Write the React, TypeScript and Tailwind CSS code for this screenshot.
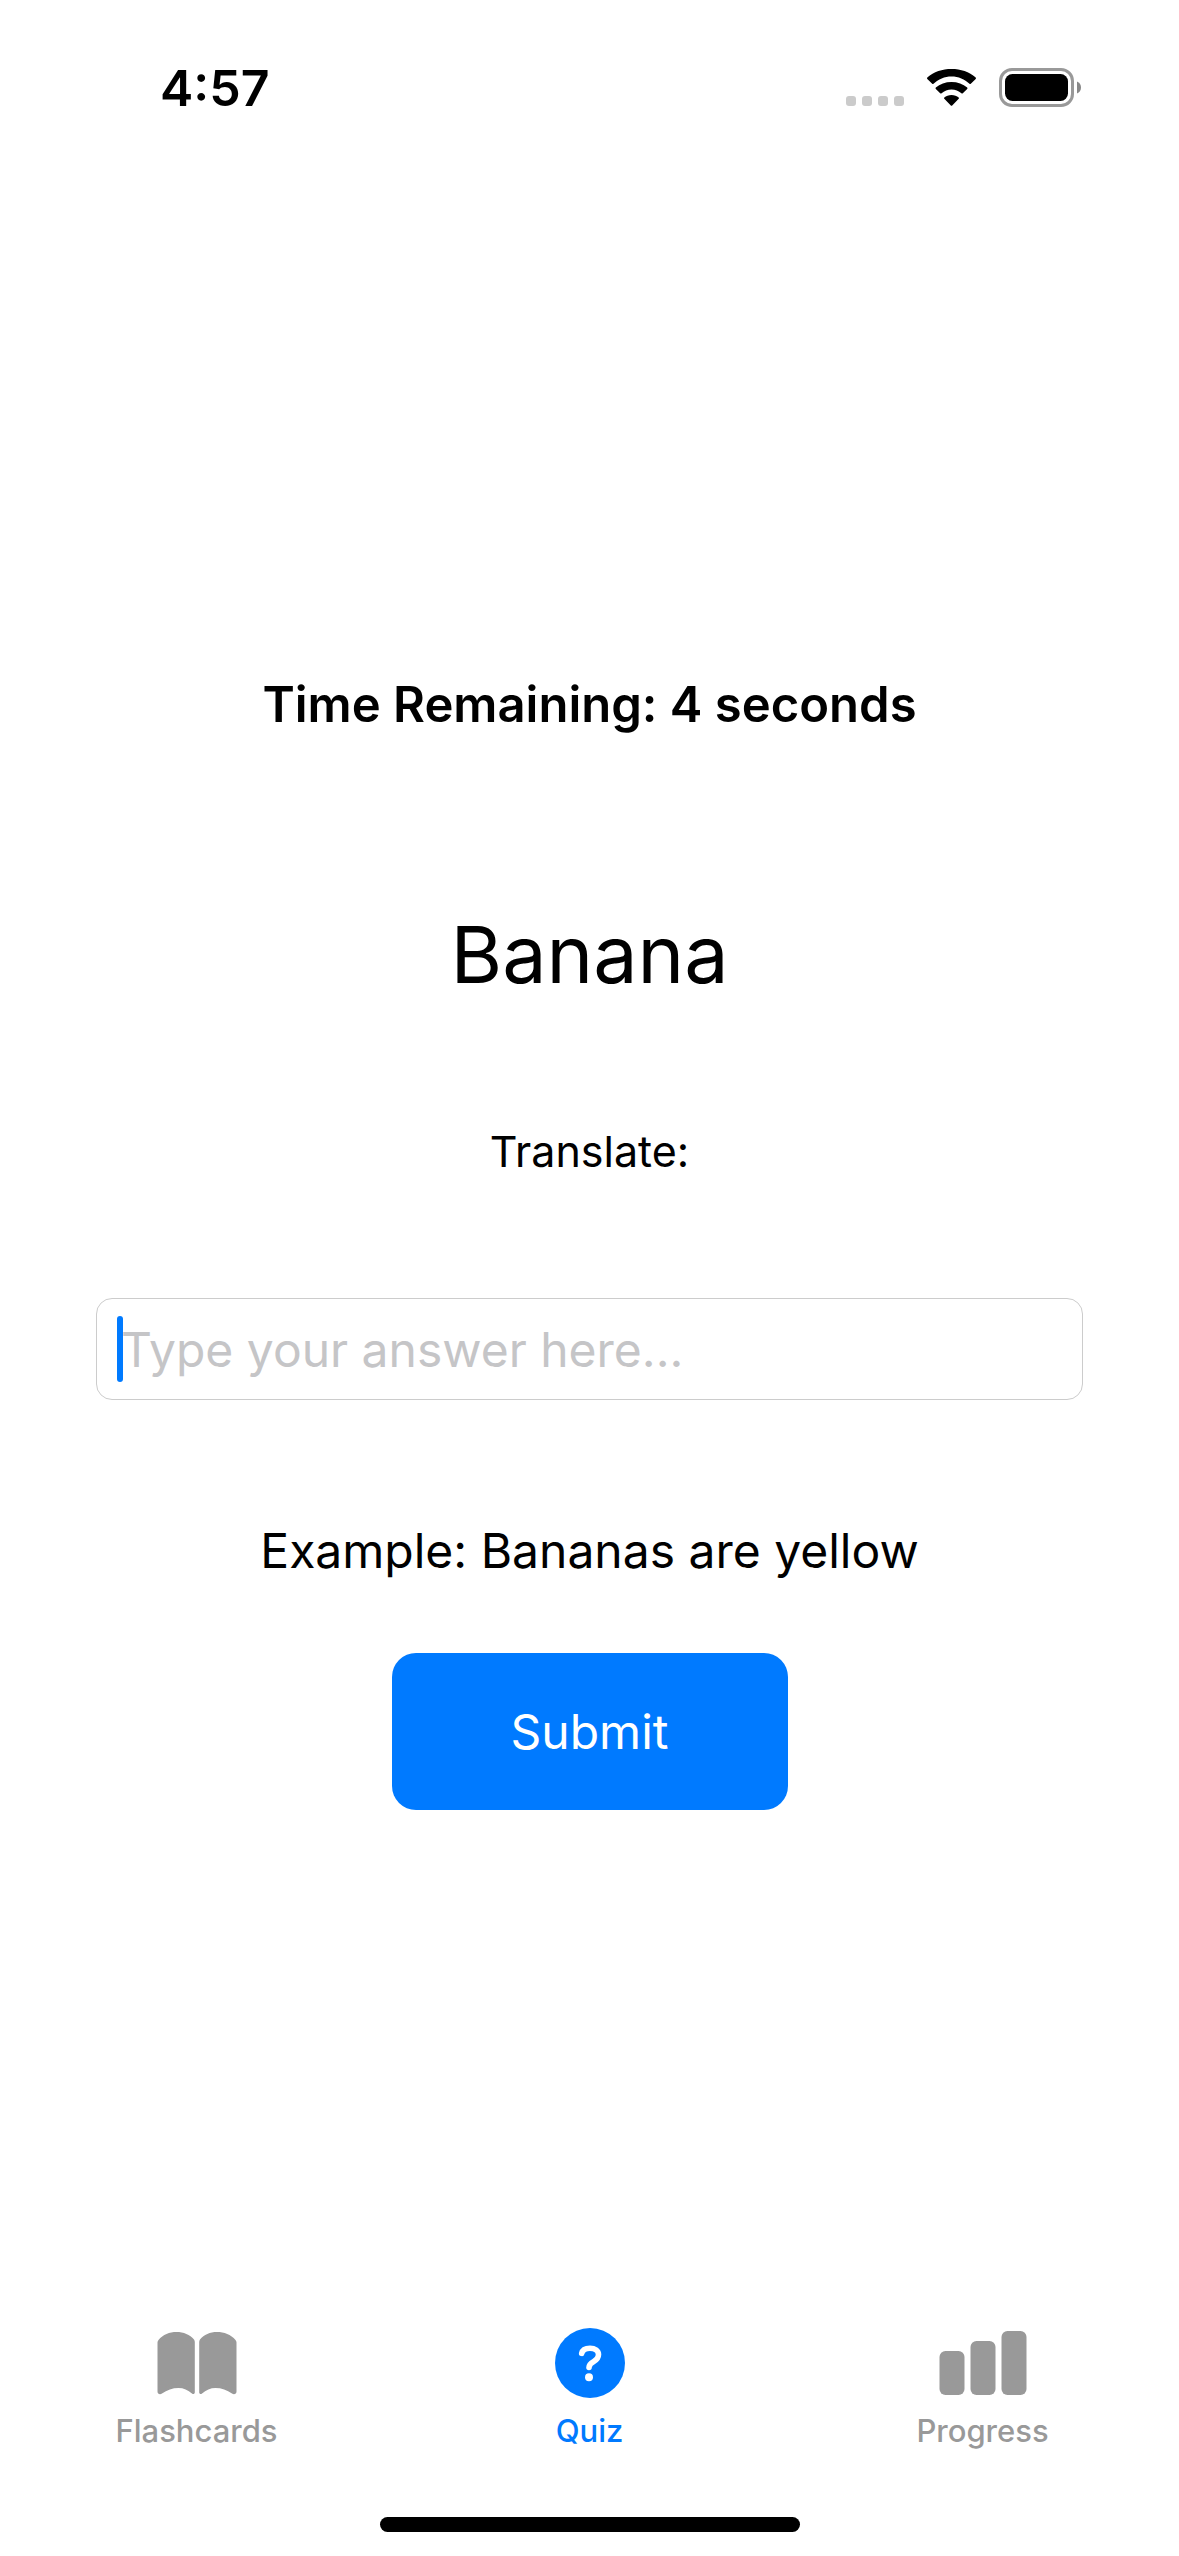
import { useState, type FormEvent, type ReactNode } from "react";

function StatusBar() {
  return (
    <header className="flex h-[177px] items-start justify-between pt-[57px] pr-[97px] pl-[160px]">
      <time className="text-[50px] leading-[62px] font-semibold">4:57</time>
      <div className="flex h-[60px] items-center" aria-hidden="true">
        <svg className="h-[40px] w-[236px]" viewBox="0 0 236 40">
          <g fill="#cbcbcb">
            <rect x="0" y="29" width="10" height="10" rx="3" />
            <rect x="16" y="29" width="10" height="10" rx="3" />
            <rect x="32" y="29" width="10" height="10" rx="3" />
            <rect x="48" y="29" width="10" height="10" rx="3" />
          </g>
          <g transform="translate(80 2)" fill="#000">
            <path d="M25.5 7.500c6.900 0 13.200 2.700 18 7.300.400.400.900.400 1.300 0l4.900-4.800c.400-.400.400-1 0-1.400C43.200 2.600 34.700 0 25.500 0S7.800 2.600 1.300 8.600c-.400.400-.400 1 0 1.400l4.900 4.800c.400.400.900.400 1.300 0 4.800-4.600 11.100-7.300 18-7.300z" />
            <path d="M25.500 20.400c3.800 0 7.200 1.400 9.900 3.800.400.400 1 .400 1.400 0l4.400-4.300c.400-.400.400-1 0-1.400-4.100-3.700-9.600-5.600-15.700-5.600s-11.600 1.900-15.700 5.600c-.400.400-.400 1 0 1.400l4.400 4.300c.400.400 1 .400 1.400 0 2.700-2.400 6.100-3.800 9.900-3.800z" />
            <path d="M32.700 28.500c.400.400.400.900 0 1.300l-6.500 6.700c-.400.400-1 .400-1.400 0l-6.500-6.700c-.400-.400-.400-.900 0-1.300 1.800-1.600 4.400-2.600 7.200-2.600s5.400 1 7.200 2.600z" />
          </g>
          <rect x="154.500" y="2.500" width="72" height="36" rx="11.500" fill="none" stroke="#999" strokeWidth="3" />
          <rect x="159" y="7" width="63" height="27" rx="7.500" fill="#000" />
          <path d="M231 14.500c2.500 1 4 3.300 4 6s-1.500 5-4 6z" fill="#888" />
        </svg>
      </div>
    </header>
  );
}

function BookIcon() {
  return (
    <svg className="h-[70px] w-[80px]" viewBox="0 0 80 70" fill="currentColor" aria-hidden="true">
      <path d="M0.500 14.500Q0.500 13 1.500 12C6 6.500 12.500 4 19.500 4C26.500 4 33 6.500 37 11.500Q37.800 12.500 37.800 14V64.500C37.800 66 36 66.500 35 65.500C31 62 26.500 60 21.500 60C15.500 60 10 62 5 65.500C3 67 0.500 66 0.500 63.500Z" />
      <path d="M79.500 14.500Q79.500 13 78.500 12C74 6.500 67 4 60 4C53 4 47 6.500 43 11.500Q42.200 12.500 42.200 14V64.500C42.200 66 44 66.500 45 65.500C49 62 53.500 60 58.500 60C64.500 60 70 62 75 65.500C77 67 79.500 66 79.500 63.500Z" />
    </svg>
  );
}

function QuestionIcon() {
  return (
    <svg className="size-[70px]" viewBox="0 0 70 70" aria-hidden="true">
      <circle cx="35" cy="35" r="35" fill="currentColor" />
      <path
        d="M26.700 25.300C27.500 21.800 30.500 20.200 35 20.200C40 20.200 43.500 22.700 43.500 26.600C43.500 30 41.800 31.800 38.600 33.700C35.500 35.500 34 37 34 39.500"
        fill="none"
        stroke="#fff"
        strokeWidth="5.600"
        strokeLinecap="round"
        strokeLinejoin="round"
      />
      <circle cx="34" cy="49.200" r="4" fill="#fff" />
    </svg>
  );
}

function BarsIcon() {
  return (
    <svg className="h-[70px] w-[88px]" viewBox="0 0 88 70" fill="currentColor" aria-hidden="true">
      <rect x="0.500" y="23" width="25" height="44" rx="6" />
      <rect x="31.500" y="13" width="25" height="54" rx="6" />
      <rect x="62.500" y="3" width="25" height="64" rx="6" />
    </svg>
  );
}

const tabs: { label: string; icon: ReactNode }[] = [
  { label: "Flashcards", icon: <BookIcon /> },
  { label: "Quiz", icon: <QuestionIcon /> },
  { label: "Progress", icon: <BarsIcon /> },
];

function TabBar() {
  const [active, setActive] = useState("Quiz");
  return (
    <footer className="flex h-[248px] flex-col items-center justify-between pb-6">
      <nav className="grid w-full grid-cols-3 pt-5">
        {tabs.map(({ label, icon }) => (
          <button
            key={label}
            type="button"
            aria-current={label === active ? "page" : undefined}
            onClick={() => setActive(label)}
            className={`flex flex-col items-center gap-[13px] text-[31px] leading-[40px] font-medium ${
              label === active ? "text-[#007aff]" : "text-[#999999]"
            }`}
          >
            {icon}
            {label}
          </button>
        ))}
      </nav>
      <div className="h-[15px] w-[420px] rounded-full bg-black" />
    </footer>
  );
}

export default function App() {
  const [answer, setAnswer] = useState("");
  const submit = (event: FormEvent) => event.preventDefault();

  return (
    <div className="flex min-h-screen flex-col bg-white font-['Inter',sans-serif] text-black">
      <StatusBar />
      <main className="flex flex-1 flex-col items-center justify-center px-24 text-center">
        <p className="text-[49px] leading-[60px] font-semibold">Time Remaining: 4 seconds</p>
        <h1 className="mt-[169px] text-[79px] leading-[100px]">Banana</h1>
        <form onSubmit={submit} className="mt-[120px] flex w-full flex-col items-center">
          <label htmlFor="answer" className="text-[43px] leading-[54px]">
            Translate:
          </label>
          <div className="relative mt-[120px] w-full">
            <input
              id="answer"
              type="text"
              value={answer}
              onChange={(event) => setAnswer(event.target.value)}
              placeholder="Type your answer here..."
              className="block h-[102px] w-full rounded-[16px] border border-[#cccccc] px-[24px] text-[48px] caret-[#007aff] outline-none placeholder:text-[#c5c5c7]"
            />
            {answer === "" && (
              <span className="pointer-events-none absolute inset-y-[18px] left-[21px] w-[6px] rounded-full bg-[#007aff]" />
            )}
          </div>
          <p className="mt-[121px] text-[48px] leading-[60px]">Example: Bananas are yellow</p>
          <button
            type="submit"
            className="mt-[72px] h-[157px] w-[396px] rounded-[24px] bg-[#007aff] text-[48px] text-white"
          >
            Submit
          </button>
        </form>
      </main>
      <TabBar />
    </div>
  );
}
